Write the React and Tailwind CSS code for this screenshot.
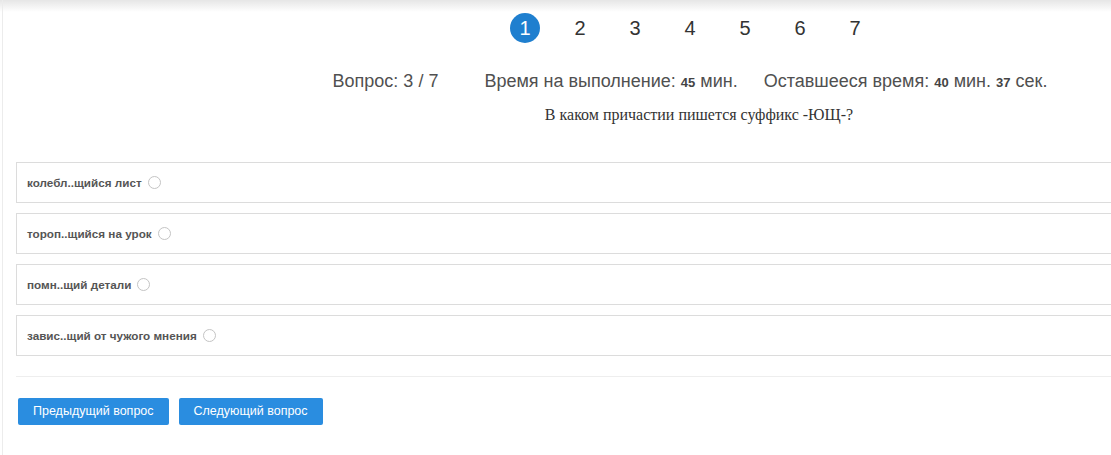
import React from 'react';

const pages = [1, 2, 3, 4, 5, 6, 7];

const answers = [
  'колебл..щийся лист',
  'тороп..щийся на урок',
  'помн..щий детали',
  'завис..щий от чужого мнения',
];

const Answer = ({ text }) => (
  <label className="flex items-center h-[41px] border border-[#dcdcdc] pl-[10px] cursor-pointer">
    <span className="text-[11.7px] font-bold text-[#555]">{text}</span>
    <span className="ml-[6px] w-[13px] h-[13px] rounded-full border border-[#c4c4c4] bg-white" />
  </label>
);

export default function App() {
  return (
    <div className="relative w-[1111px] h-[455px] overflow-hidden bg-white" style={{ fontFamily: '"Liberation Sans", Arial, sans-serif' }}>
      <div className="absolute top-0 left-0 right-0 h-[12px] bg-gradient-to-b from-[#e6e6e6] to-white" />
      <div className="absolute top-0 bottom-0 left-[2px] w-[1px] bg-[#ececec]" />

      <div className="relative w-[1380px]">
        <div className="flex justify-center pt-[13px]">
          {pages.map((p) => (
            <div key={p} className="w-[55px] flex justify-center">
              <span
                className={
                  p === 1
                    ? 'w-[30px] h-[30px] rounded-full bg-[#1f7fcf] text-white flex items-center justify-center text-[20px]'
                    : 'w-[30px] h-[30px] flex items-center justify-center text-[20px] text-[#333]'
                }
              >
                {p}
              </span>
            </div>
          ))}
        </div>

        <div className="flex justify-center items-baseline mt-[27px] text-[18px] text-[#505050] leading-[22px]">
          <span>Вопрос: 3 / 7</span>
          <span className="ml-[46px]">
            Время на выполнение: <b className="text-[13px] text-[#444]">45</b> мин.
          </span>
          <span className="ml-[26px]">
            Оставшееся время: <b className="text-[13px] text-[#444]">40</b> мин. <b className="text-[13px] text-[#444]">37</b> сек.
          </span>
        </div>

        <p className="mt-[9px] pl-[18px] text-center text-[16px] text-[#333]" style={{ fontFamily: '"Liberation Serif", "Times New Roman", serif' }}>
          В каком причастии пишется суффикс -ЮЩ-?
        </p>

        <div className="ml-[16px] mt-[35px] flex flex-col gap-[10px]">
          {answers.map((a) => (
            <Answer key={a} text={a} />
          ))}
        </div>

        <div className="ml-[16px] mt-[20px] border-t border-[#eeeeee]" />

        <div className="ml-[18px] mt-[21px] flex gap-[10px]">
          <button className="h-[27px] px-[15px] rounded-[2px] bg-[#2a8de0] text-white text-[12.5px]">Предыдущий вопрос</button>
          <button className="h-[27px] px-[15px] rounded-[2px] bg-[#2a8de0] text-white text-[12.5px]">Следующий вопрос</button>
        </div>
      </div>
    </div>
  );
}
